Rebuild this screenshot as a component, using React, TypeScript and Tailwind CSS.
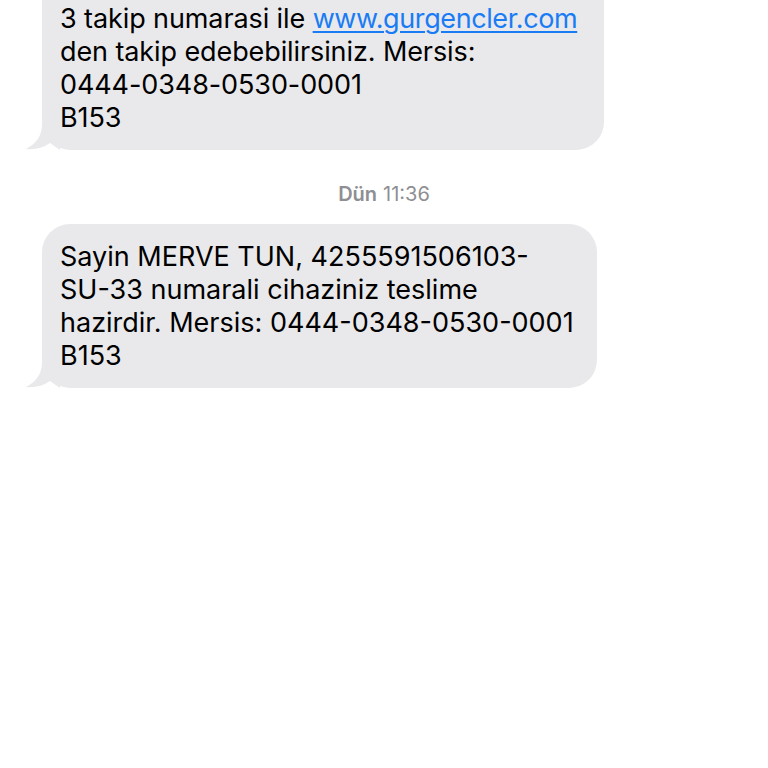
import React from "react";

const Tail = () => (
  <svg
    className="absolute left-[-16px] bottom-0"
    width="34"
    height="26"
    viewBox="0 0 34 26"
  >
    <path
      d="M16 0 C16 10 12 19 0 25 C8 26 17 24 24 19 L34 26 L34 0 Z"
      fill="#e9e9eb"
    />
  </svg>
);

const Line = ({ children }: { children: React.ReactNode }) => (
  <div className="whitespace-nowrap">{children}</div>
);

export default function App() {
  return (
    <div
      className="w-[768px] h-[768px] bg-white overflow-hidden text-black"
      style={{ fontFamily: 'Inter, "Liberation Sans", Arial, sans-serif' }}
    >
      <div className="pl-[42px] flex flex-col">
        <div className="relative w-[562px] bg-[#e9e9eb] rounded-b-[28px] pl-[18px] pt-[2px] pb-[16px] text-[27px] leading-[33px] tracking-[-0.1px]">
          <Line>
            3 takip numarasi ile{" "}
            <span className="text-[#1a7cf5] underline decoration-[1.5px] underline-offset-[3px] tracking-[-0.4px]">
              www.gurgencler.com
            </span>
          </Line>
          <Line>den takip edebebilirsiniz. Mersis:</Line>
          <Line>0444-0348-0530-0001</Line>
          <Line>B153</Line>
          <Tail />
        </div>
      </div>
      <div className="pt-[32px] pb-[18px] flex justify-center text-[20px] leading-[24px] text-[#8e8e93]">
        <span className="font-semibold">Dün</span>
        <span className="ml-[6px]">11:36</span>
      </div>
      <div className="pl-[42px] flex flex-col">
        <div className="relative w-[555px] bg-[#e9e9eb] rounded-[28px] pl-[18px] pt-[16px] pb-[16px] text-[27px] leading-[33px]">
          <Line>Sayin MERVE TUN, 4255591506103-</Line>
          <Line>SU-33 numarali cihaziniz teslime</Line>
          <Line>hazirdir. Mersis: 0444-0348-0530-0001</Line>
          <Line>B153</Line>
          <Tail />
        </div>
      </div>
    </div>
  );
}
